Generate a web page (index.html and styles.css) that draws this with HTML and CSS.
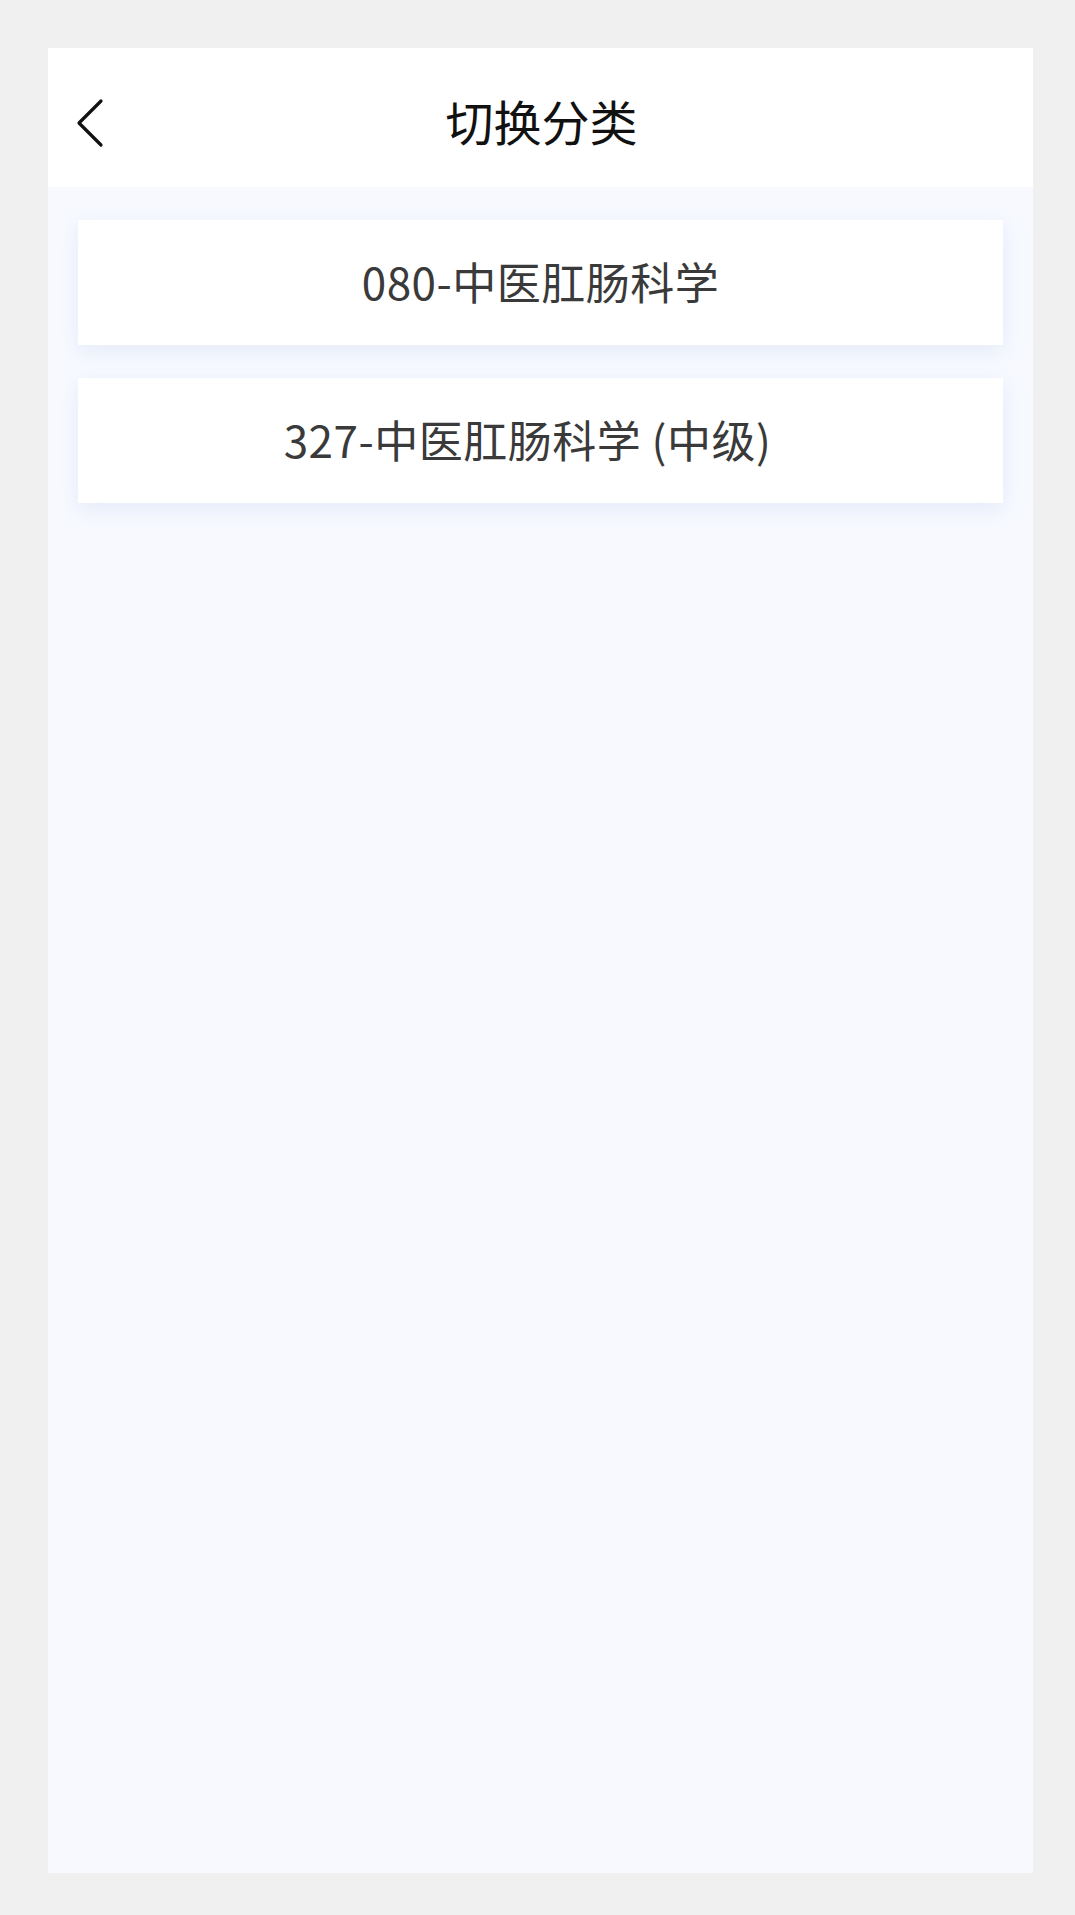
FILE: index.html
```html
<!DOCTYPE html>
<html lang="zh-CN">
<head>
  <meta charset="UTF-8">
  <meta name="viewport" content="width=device-width, initial-scale=1.0">
  <title>切换分类</title>
  <link rel="stylesheet" href="styles.css">
</head>
<body>
  <div class="screen">
    <!-- Header -->
    <header class="header">
      <a class="back" href="#" aria-label="返回">
        <svg width="32" height="50" viewBox="0 0 32 50" fill="none">
          <path d="M27 3 L5 25 L27 47" stroke="#111" stroke-width="3.2" stroke-linecap="round" stroke-linejoin="round"/>
        </svg>
      </a>
      <h1 class="title">切换分类</h1>
    </header>

    <!-- Category list -->
    <div class="list">
      <div class="item">080-中医肛肠科学</div>
      <div class="item">327-中医肛肠科学 <span class="level">(中级)</span></div>
    </div>
  </div>
</body>
</html>
```

FILE: styles.css
```css
body {
  font-family: "Noto Sans CJK SC", "Noto Sans", sans-serif;
  margin: 0;
  padding: 48px 42px 42px 48px;
  background: #f0f0f0;
  color: #333;
}
.screen {
  width: 985px;
  height: 1825px;
  background: #f7f9fe;
  display: flex;
  flex-direction: column;
}
.header {
  position: relative;
  height: 139px;
  background: #fff;
  display: flex;
  align-items: center;
  justify-content: center;
}
.back {
  position: absolute;
  left: 26px;
  top: 50px;
  display: flex;
}
.title {
  margin: 0;
  font-size: 48px;
  font-weight: 400;
  color: #111;
  padding-left: 2px;
  padding-top: 4px;
}
.list {
  display: flex;
  flex-direction: column;
  gap: 33px;
  padding: 33px 30px;
}
.item {
  height: 121px;
  padding-bottom: 4px;
  background: #fff;
  display: flex;
  align-items: center;
  justify-content: center;
  white-space: pre;
  font-size: 44px;
  letter-spacing: 0.5px;
  color: #3a3a3a;
  box-shadow: 0 6px 18px rgba(200, 215, 245, 0.4);
}
.level {
  margin-right: 26px;
}
```
